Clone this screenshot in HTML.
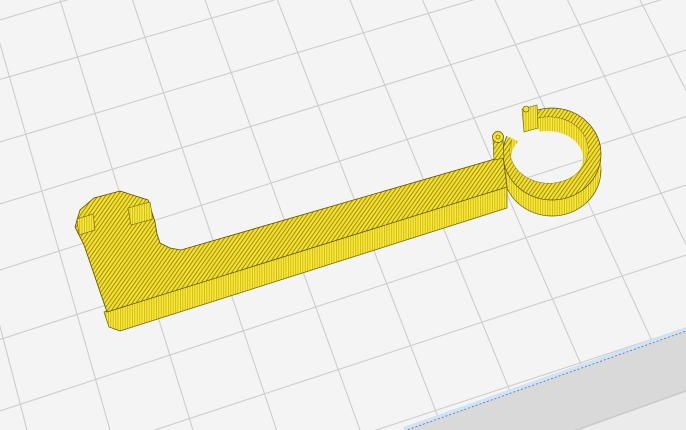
<!DOCTYPE html>
<html><head><meta charset="utf-8"><style>
html,body{margin:0;padding:0;background:#f4f4f4;overflow:hidden;width:686px;height:430px}
svg{display:block}
</style></head><body>
<svg width="686" height="430" viewBox="0 0 686 430" xmlns="http://www.w3.org/2000/svg">
<defs>
<pattern id="hatch" width="3.2" height="3.2" patternUnits="userSpaceOnUse" patternTransform="rotate(35)">
<rect width="3.2" height="3.2" fill="#f4e232"/>
<rect width="1.0" height="3.2" fill="#a08c10"/>
</pattern>
<pattern id="side" width="2.4" height="4" patternUnits="userSpaceOnUse">
<rect width="2.4" height="4" fill="#f8e838"/>
<rect width="0.7" height="4" fill="#c2ac14"/>
</pattern>
<mask id="gap">
<rect width="686" height="430" fill="#fff"/>
<polygon points="552,156 470,120 470,60 500,55" fill="#000"/>
</mask>
<clipPath id="holeclip"><ellipse cx="549" cy="150" rx="39" ry="33"/></clipPath>
</defs>
<rect width="686" height="430" fill="#f4f4f4"/>
<g stroke="#cdcdcd" stroke-width="1.1" fill="none">
<line x1="-85" y1="0" x2="27" y2="430"/>
<line x1="-12.5" y1="0" x2="110" y2="430"/>
<line x1="60" y1="0" x2="193" y2="430"/>
<line x1="132.5" y1="0" x2="276.6" y2="430"/>
<line x1="205" y1="0" x2="360" y2="430"/>
<line x1="277.5" y1="0" x2="443" y2="430"/>
<line x1="350" y1="0" x2="526" y2="430"/>
<line x1="422.5" y1="0" x2="609.5" y2="430"/>
<line x1="495" y1="0" x2="693" y2="430"/>
<line x1="567.5" y1="0" x2="776" y2="430"/>
<line x1="640" y1="0" x2="859" y2="430"/>
<line x1="0" y1="20" x2="686" y2="-186"/>
<line x1="0" y1="79.5" x2="686" y2="-119.5"/>
<line x1="0" y1="142" x2="686" y2="-64"/>
<line x1="0" y1="204" x2="686" y2="-8"/>
<line x1="0" y1="270" x2="686" y2="50"/>
<line x1="0" y1="339.5" x2="686" y2="116.5"/>
<line x1="0" y1="411" x2="686" y2="185"/>
<line x1="0" y1="481" x2="686" y2="255"/>
<line x1="0" y1="554" x2="686" y2="328"/>
</g>
<polygon points="404,431 686,331 686,431" fill="#d9d9d9"/>
<line x1="404" y1="429" x2="686" y2="329" stroke="#d3e2f0" stroke-width="4"/>
<line x1="404" y1="431" x2="686" y2="331" stroke="#3d6fd0" stroke-width="0.8" stroke-dasharray="2,2"/>
<polygon points="574,431 686,391 686,431" fill="#ebebeb"/>
<line x1="574" y1="431" x2="686" y2="391" stroke="#c9c9c9" stroke-width="1.5"/>

<g mask="url(#gap)">
<ellipse cx="552" cy="170" rx="49" ry="46" fill="url(#side)" stroke="#6a5e05" stroke-width="0.7"/>
<rect x="503" y="154" width="98" height="16" fill="url(#side)"/>
<path d="M503,154 A49,46 0 1,1 601,154 A49,46 0 1,1 503,154 Z M510,150 A39,33 0 1,0 588,150 A39,33 0 1,0 510,150 Z" fill-rule="evenodd" fill="url(#hatch)" stroke="#5a5000" stroke-width="0.7"/>
<g clip-path="url(#holeclip)">
<rect x="505" y="112" width="90" height="75" fill="url(#side)"/>
<ellipse cx="547" cy="158" rx="36" ry="27" fill="#f4f4f4"/>
<line x1="480" y1="193" x2="610" y2="151" stroke="#cdcdcd" stroke-width="1.1"/>
<line x1="560" y1="0" x2="620" y2="300" stroke="#cdcdcd" stroke-width="1.1"/>
</g>
</g>

<polygon points="104,312 507,186 507,208 120,331 109,327" fill="url(#side)" stroke="#6a5e05" stroke-width="0.7"/>
<path d="M75,227 L80,210 L94,198 L120,191 L148,200 L155,222 L157,234 L160,243 L170,248 L181,250 L495,159 L503,156 L507,187 L107,312 L84,245 Z" fill="url(#hatch)" stroke="#5a5000" stroke-width="0.8"/>
<polygon points="77,219 93,214 95,230 79,235" fill="url(#side)" stroke="#6a5e05" stroke-width="0.6"/>
<polygon points="128,208 150,202 153,219 131,225" fill="url(#side)" stroke="#6a5e05" stroke-width="0.6"/>
<path d="M493,140 L503,138 L504,158 L494,160 Z" fill="url(#hatch)" stroke="#5a5000" stroke-width="0.6"/>
<circle cx="498" cy="137" r="5.5" fill="#f4e232" stroke="#5a5000" stroke-width="0.7"/>
<circle cx="498" cy="137" r="2" fill="none" stroke="#5a5000" stroke-width="0.6"/>
<polygon points="522,109 537,105 538,128 524,132" fill="url(#side)" stroke="#6a5e05" stroke-width="0.6"/>
<circle cx="526" cy="109" r="3" fill="#f4e232" stroke="#5a5000" stroke-width="0.6"/>
</svg>
</body></html>
